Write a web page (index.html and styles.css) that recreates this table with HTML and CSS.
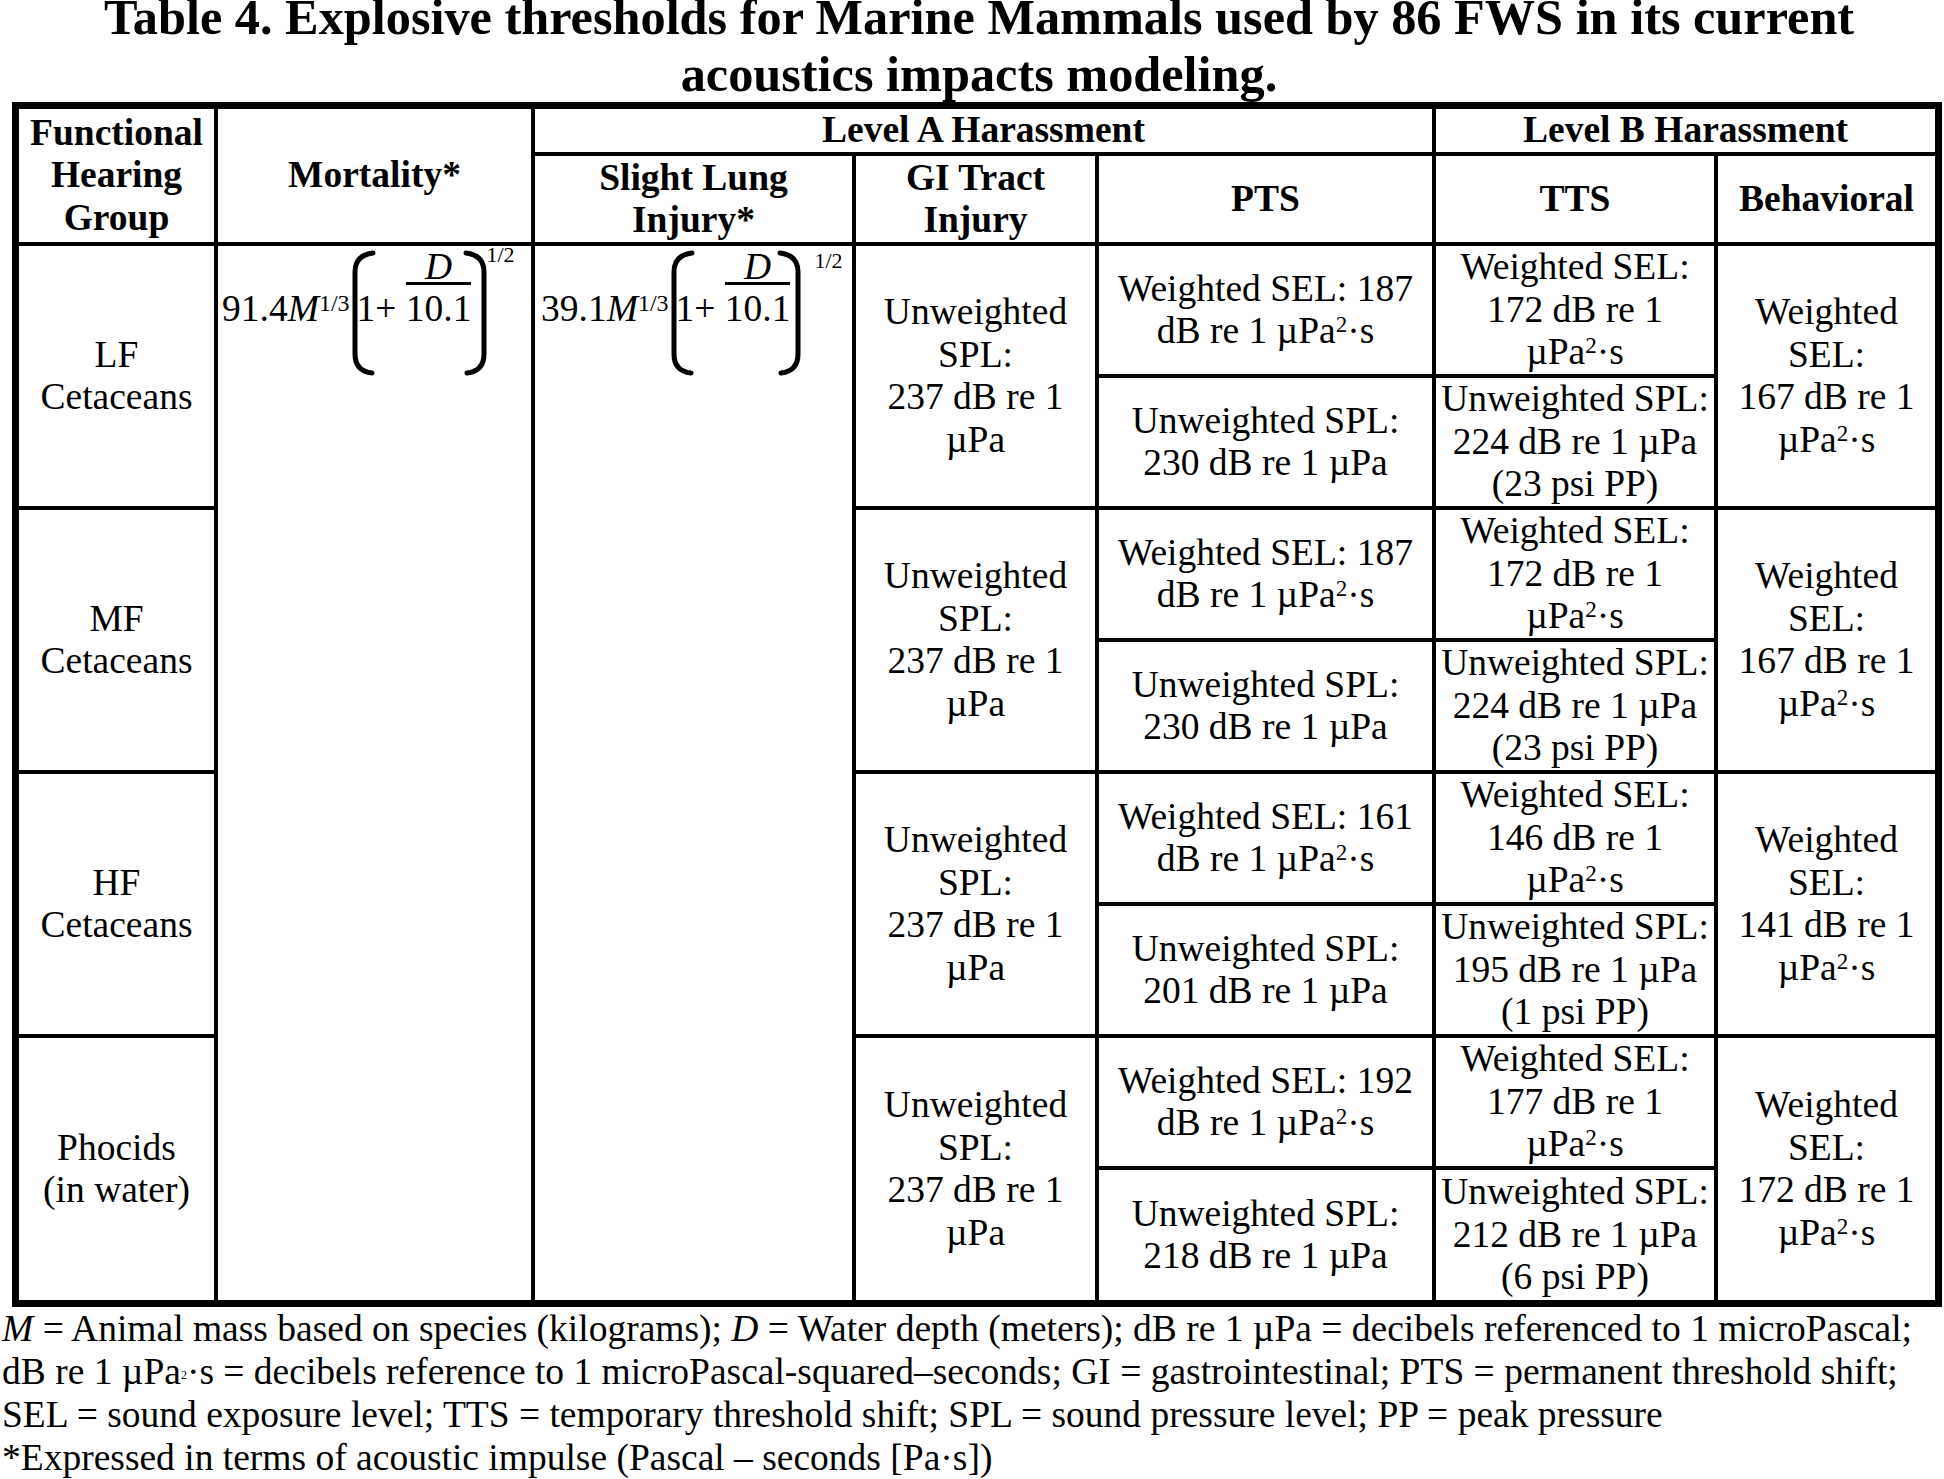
FILE: index.html
```html
<!DOCTYPE html>
<html lang="en">
<head>
<meta charset="utf-8">
<title>Table 4. Explosive thresholds for Marine Mammals</title>
<link rel="stylesheet" href="styles.css">
</head>
<body>
<h1 class="title">Table 4. Explosive thresholds for Marine Mammals used by 86 FWS in its current<br>acoustics impacts modeling.</h1>
<div class="frame">
<table class="thresholds">
<colgroup>
<col class="c-group"><col class="c-mort"><col class="c-lung"><col class="c-gi"><col class="c-pts"><col class="c-tts"><col class="c-beh">
</colgroup>
<thead>
<tr class="h1">
<th rowspan="2">Functional<br>Hearing<br>Group</th>
<th rowspan="2">Mortality*</th>
<th colspan="3">Level A Harassment</th>
<th colspan="2">Level B Harassment</th>
</tr>
<tr class="h2">
<th>Slight Lung<br>Injury*</th>
<th>GI Tract<br>Injury</th>
<th>PTS</th>
<th>TTS</th>
<th>Behavioral</th>
</tr>
</thead>
<tbody>
<tr class="sub">
<td rowspan="2">LF<br>Cetaceans</td>
<td rowspan="8" class="fcell">
<div class="formula formula-mort">
<span class="coef">91.4<i>M</i><sup class="pow">1/3</sup></span>
<svg class="paren" width="4" height="126" viewBox="0 0 4 126"><path d="M20 3 Q2 5 2 22 L2 104 Q2 121 19 123"/></svg>
<span class="inner">1+ <span class="frac"><span class="num">D</span><span class="den">10.1</span></span></span>
<svg class="paren paren-r" width="4" height="126" viewBox="0 0 4 126"><path d="M-16 3 Q2 5 2 22 L2 104 Q2 121 -15 123"/></svg>
<span class="exp">1/2</span>
</div>
</td>
<td rowspan="8" class="fcell">
<div class="formula formula-lung">
<span class="coef">39.1<i>M</i><sup class="pow">1/3</sup></span>
<svg class="paren" width="4" height="126" viewBox="0 0 4 126"><path d="M20 3 Q2 5 2 22 L2 104 Q2 121 19 123"/></svg>
<span class="inner">1+ <span class="frac"><span class="num">D</span><span class="den">10.1</span></span></span>
<svg class="paren paren-r" width="4" height="126" viewBox="0 0 4 126"><path d="M-16 3 Q2 5 2 22 L2 104 Q2 121 -15 123"/></svg>
<span class="exp">1/2</span>
</div>
</td>
<td rowspan="2">Unweighted<br>SPL:<br>237 dB re 1<br>µPa</td>
<td>Weighted SEL: 187<br>dB re 1 µPa<sup>2</sup>·s</td>
<td>Weighted SEL:<br>172 dB re 1<br>µPa<sup>2</sup>·s</td>
<td rowspan="2">Weighted<br>SEL:<br>167 dB re 1<br>µPa<sup>2</sup>·s</td>
</tr>
<tr class="sub">
<td>Unweighted SPL:<br>230 dB re 1 µPa</td>
<td>Unweighted SPL:<br>224 dB re 1 µPa<br>(23 psi PP)</td>
</tr>
<tr class="sub">
<td rowspan="2">MF<br>Cetaceans</td>
<td rowspan="2">Unweighted<br>SPL:<br>237 dB re 1<br>µPa</td>
<td>Weighted SEL: 187<br>dB re 1 µPa<sup>2</sup>·s</td>
<td>Weighted SEL:<br>172 dB re 1<br>µPa<sup>2</sup>·s</td>
<td rowspan="2">Weighted<br>SEL:<br>167 dB re 1<br>µPa<sup>2</sup>·s</td>
</tr>
<tr class="sub">
<td>Unweighted SPL:<br>230 dB re 1 µPa</td>
<td>Unweighted SPL:<br>224 dB re 1 µPa<br>(23 psi PP)</td>
</tr>
<tr class="sub">
<td rowspan="2">HF<br>Cetaceans</td>
<td rowspan="2">Unweighted<br>SPL:<br>237 dB re 1<br>µPa</td>
<td>Weighted SEL: 161<br>dB re 1 µPa<sup>2</sup>·s</td>
<td>Weighted SEL:<br>146 dB re 1<br>µPa<sup>2</sup>·s</td>
<td rowspan="2">Weighted<br>SEL:<br>141 dB re 1<br>µPa<sup>2</sup>·s</td>
</tr>
<tr class="sub">
<td>Unweighted SPL:<br>201 dB re 1 µPa</td>
<td>Unweighted SPL:<br>195 dB re 1 µPa<br>(1 psi PP)</td>
</tr>
<tr class="sub">
<td rowspan="2">Phocids<br>(in water)</td>
<td rowspan="2">Unweighted<br>SPL:<br>237 dB re 1<br>µPa</td>
<td>Weighted SEL: 192<br>dB re 1 µPa<sup>2</sup>·s</td>
<td>Weighted SEL:<br>177 dB re 1<br>µPa<sup>2</sup>·s</td>
<td rowspan="2">Weighted<br>SEL:<br>172 dB re 1<br>µPa<sup>2</sup>·s</td>
</tr>
<tr class="sub">
<td>Unweighted SPL:<br>218 dB re 1 µPa</td>
<td>Unweighted SPL:<br>212 dB re 1 µPa<br>(6 psi PP)</td>
</tr>
</tbody>
</table>
</div>
<div class="notes">
<p><i>M</i> = Animal mass based on species (kilograms); <i>D</i> = Water depth (meters); dB re 1 µPa = decibels referenced to 1 microPascal;<br>dB re 1 µPa<sup class="tiny">2</sup>·s = decibels reference to 1 microPascal-squared–seconds; GI = gastrointestinal; PTS = permanent threshold shift;<br>SEL = sound exposure level; TTS = temporary threshold shift; SPL = sound pressure level; PP = peak pressure</p>
<p>*Expressed in terms of acoustic impulse (Pascal – seconds [Pa·s])</p>
</div>
</body>
</html>
```

FILE: styles.css
```css
* { box-sizing: border-box; }
html, body { margin: 0; padding: 0; background: #fff; }
body {
  font-family: "Liberation Serif", "Times New Roman", serif;
  font-size: 37.5px;
  color: #000;
}
.title {
  font-size: 50.3px;
  font-weight: bold;
  line-height: 56.5px;
  text-align: center;
  white-space: nowrap;
  width: 1930px;
  margin: -11px 0 0 14px;
}
.frame {
  width: 1930px;
  margin-left: 12px;
  border: 7px solid #000;
}
.thresholds {
  width: 100%;
  border-collapse: collapse;
  border-style: hidden;
  table-layout: fixed;
}
.c-group { width: 197px; }
.c-mort { width: 317px; }
.c-lung { width: 321px; }
.c-gi { width: 243px; }
.c-pts { width: 337px; }
.c-tts { width: 282px; }
.c-beh { width: 219px; }
.thresholds th,
.thresholds td {
  border: 4px solid #000;
  padding: 0 2px;
  text-align: center;
  vertical-align: middle;
  line-height: 42.5px;
  white-space: nowrap;
}
.thresholds th { font-weight: bold; }
.h1 { height: 45px; }
.h2 { height: 90px; }
.sub { height: 132px; }
.thresholds sup {
  font-size: 23px;
  line-height: 0;
  vertical-align: 11px;
}
.thresholds td.fcell {
  vertical-align: top;
  text-align: left;
  padding: 6px 0 0 0;
}
.formula {
  display: flex;
  align-items: baseline;
  white-space: nowrap;
}
.formula-mort { padding-left: 4px; }
.formula-lung { padding-left: 6px; }
.coef { line-height: 42.5px; }
.thresholds sup.pow {
  font-size: 24px;
  vertical-align: 10px;
}
.paren {
  align-self: flex-start;
  flex: none;
  margin-left: 3px;
  margin-top: -2px;
  overflow: visible;
}
.paren path {
  fill: none;
  stroke: #000;
  stroke-width: 5;
  stroke-linecap: round;
}
.formula-mort .paren-r { margin-left: 11px; }
.formula-lung .paren-r { margin-left: 6px; }
.inner {
  display: block;
  line-height: 42.5px;
}
.frac {
  display: inline-block;
  vertical-align: baseline;
  text-align: center;
}
.num {
  display: block;
  font-style: italic;
  line-height: 30px;
  border-bottom: 3px solid #000;
  margin-bottom: 3px;
}
.den { display: block; }
.exp {
  align-self: flex-start;
  font-size: 22px;
  line-height: 22px;
  margin-top: -8px;
}
.formula-lung .exp {
  margin-left: 14px;
  margin-top: -2px;
}
.notes {
  padding-left: 2px;
  line-height: 43px;
}
.notes p {
  margin: 0;
  white-space: nowrap;
}
.notes sup.tiny {
  font-size: 12px;
  line-height: 0;
  vertical-align: 5px;
}
```
